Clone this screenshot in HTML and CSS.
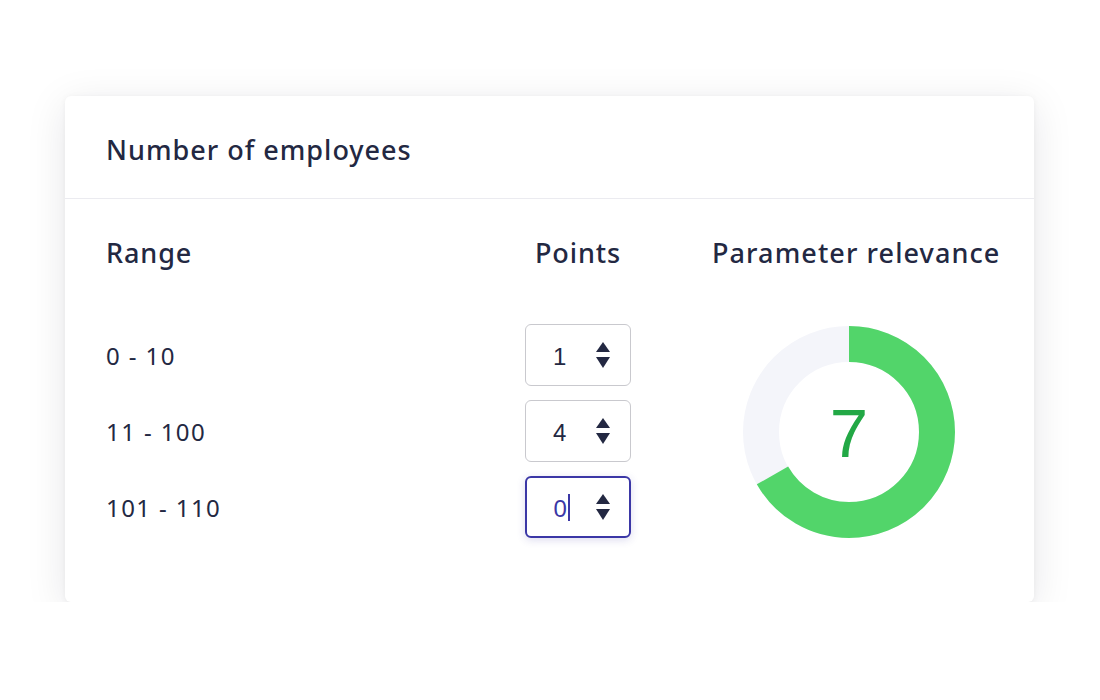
FILE: index.html
```html
<!DOCTYPE html>
<html>
<head>
<meta charset="utf-8">
<link rel="stylesheet" href="styles.css">
</head>
<body>
<div class="page">
  <div class="card">
    <div class="card-header">
      <h2 class="card-title">Number of employees</h2>
    </div>
    <div class="card-body">
      <div class="col-head col-range">Range</div>
      <div class="col-head col-points">Points</div>
      <div class="col-head col-rel">Parameter relevance</div>

      <div class="ranges">
        <div class="range-row">0 - 10</div>
        <div class="range-row">11 - 100</div>
        <div class="range-row">101 - 110</div>
      </div>

      <div class="inputs">
        <div class="numbox">
          <span class="num">1</span>
          <svg class="spin" width="16" height="28" viewBox="0 0 16 28"><path d="M8 1 L15 11 L1 11 Z" fill="#232842"/><path d="M1 16 L15 16 L8 27 Z" fill="#232842"/></svg>
        </div>
        <div class="numbox">
          <span class="num">4</span>
          <svg class="spin" width="16" height="28" viewBox="0 0 16 28"><path d="M8 1 L15 11 L1 11 Z" fill="#232842"/><path d="M1 16 L15 16 L8 27 Z" fill="#232842"/></svg>
        </div>
        <div class="numbox focused">
          <span class="num">0</span><span class="caret"></span>
          <svg class="spin" width="16" height="28" viewBox="0 0 16 28"><path d="M8 1 L15 11 L1 11 Z" fill="#232842"/><path d="M1 16 L15 16 L8 27 Z" fill="#232842"/></svg>
        </div>
      </div>

      <div class="donut-wrap">
        <div class="donut">
          <svg width="212" height="212" viewBox="0 0 212 212">
            <circle cx="106" cy="106" r="88" fill="none" stroke="#f4f5fa" stroke-width="36"/>
            <circle cx="106" cy="106" r="88" fill="none" stroke="#52d56a" stroke-width="36"
              stroke-dasharray="368.6 552.9" transform="rotate(-90 106 106)"/>
          </svg>
          <span class="donut-value">7</span>
        </div>
      </div>
    </div>
  </div>
</div>
</body>
</html>
```

FILE: styles.css
```css
* { box-sizing: border-box; }
html, body { margin: 0; padding: 0; background: #ffffff; }
body {
  font-family: "Noto Sans", "Open Sans", sans-serif;
  color: #232842;
}
.page {
  padding: 96px 66px 0 65px;
}
.card {
  background: #ffffff;
  border-radius: 6px;
  box-shadow: 0 8px 40px rgba(20, 20, 40, 0.10), 0 1px 6px rgba(20, 20, 40, 0.05);
  height: 506px;
}
.card-header {
  padding: 38px 41px 32px;
  border-bottom: 1px solid #ebebf0;
}
.card-title {
  margin: 0;
  font-size: 27px;
  line-height: 32px;
  font-weight: 500;
  letter-spacing: 1px;
}
.card-body {
  display: grid;
  grid-template-columns: 1fr 106px 287px;
  grid-template-rows: 32px auto;
  column-gap: 81px;
  row-gap: 55px;
  padding: 38px 35px 0 41px;
}
.col-head {
  font-size: 27px;
  line-height: 32px;
  font-weight: 500;
  letter-spacing: 0.9px;
  white-space: nowrap;
}
.col-points { text-align: center; }
.col-rel { text-align: center; letter-spacing: 1.1px; }
.ranges {
  display: flex;
  flex-direction: column;
  gap: 14px;
}
.range-row {
  height: 62px;
  display: flex;
  align-items: center;
  font-size: 24px;
  letter-spacing: 1.4px;
}
.inputs {
  display: flex;
  flex-direction: column;
  gap: 14px;
}
.numbox {
  height: 62px;
  border: 1.5px solid #c9c9ce;
  border-radius: 6px;
  display: flex;
  align-items: center;
  padding: 0 19px 0 27px;
  background: #fff;
}
.numbox.focused {
  border: 2px solid #3b37a6;
  box-shadow: 0 2px 8px rgba(59, 55, 166, 0.18);
  padding: 0 18.5px 0 26.5px;
}
.num {
  font-family: "Liberation Sans", Arial, sans-serif;
  font-size: 24px;
  line-height: 28px;
  padding-top: 3px;
}
.spin { display: block; margin-left: auto; }
.focused .num { color: #3b37a6; }
.caret {
  display: block;
  width: 2px;
  height: 27px;
  background: #3b37a6;
  margin-left: 1px;
  margin-top: 1px;
}
.donut-wrap {
  display: flex;
  justify-content: center;
  padding-right: 13px;
  padding-top: 2px;
}
.donut {
  position: relative;
  width: 212px;
  height: 212px;
}
.donut svg { display: block; }
.donut-value {
  position: absolute;
  inset: 0;
  display: flex;
  align-items: center;
  justify-content: center;
  font-family: "Liberation Sans", Arial, sans-serif;
  font-size: 69px;
  color: #22a845;
  padding-top: 2px;
}
```
